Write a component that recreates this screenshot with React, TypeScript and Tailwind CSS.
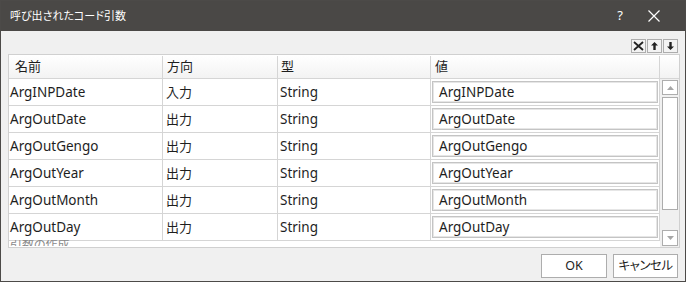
import React from "react";

const rows = [
  { name: "ArgINPDate", dir: "入力", type: "String", value: "ArgINPDate" },
  { name: "ArgOutDate", dir: "出力", type: "String", value: "ArgOutDate" },
  { name: "ArgOutGengo", dir: "出力", type: "String", value: "ArgOutGengo" },
  { name: "ArgOutYear", dir: "出力", type: "String", value: "ArgOutYear" },
  { name: "ArgOutMonth", dir: "出力", type: "String", value: "ArgOutMonth" },
  { name: "ArgOutDay", dir: "出力", type: "String", value: "ArgOutDay" },
];

const font = "font-['Segoe_UI','Noto_Sans','Noto_Sans_CJK_JP',sans-serif] [font-feature-settings:'palt']";

function ToolButton({ children }: { children: React.ReactNode }) {
  return (
    <div className="w-[15px] h-[14px] border border-[#adadad] bg-[#f3f3f3] flex items-center justify-center">
      {children}
    </div>
  );
}

export default function App() {
  return (
    <div className={`w-[686px] h-[282px] flex flex-col border border-[#4c4a48] bg-[#f0f0f0] text-[13.5px] text-[#1e1e1e] ${font}`}>
      {/* Title bar */}
      <div className="h-[30px] bg-[#4a4846] flex items-center pl-[9px] text-white shrink-0">
        <span className="text-[11px]">呼び出されたコード引数</span>
        <span className="ml-auto text-[13px] mr-[25px]">?</span>
        <svg width="12" height="12" viewBox="0 0 12 12" className="mr-[25px]">
          <path d="M0.5 0.5 L11.5 11.5 M11.5 0.5 L0.5 11.5" stroke="white" strokeWidth="1.2" />
        </svg>
      </div>

      {/* Body */}
      <div className="flex-1 flex flex-col pl-[7px] pr-[5px] pt-[8px] pb-[3px]">
        {/* toolbar */}
        <div className="flex justify-end gap-[1px] pr-[2px] h-[14px] mb-[1px]">
          <ToolButton>
            <svg width="11" height="10" viewBox="0 0 11 10">
              <path d="M1 1 L10 9 M10 1 L1 9" stroke="#222" strokeWidth="1.8" />
            </svg>
          </ToolButton>
          <ToolButton>
            <svg width="9" height="10" viewBox="0 0 9 10">
              <path d="M4.5 1 L1 4.5 H3.3 V9 H5.7 V4.5 H8 Z" fill="#222" />
            </svg>
          </ToolButton>
          <ToolButton>
            <svg width="9" height="10" viewBox="0 0 9 10">
              <path d="M4.5 9 L1 5.5 H3.3 V1 H5.7 V5.5 H8 Z" fill="#222" />
            </svg>
          </ToolButton>
        </div>

        {/* grid */}
        <div className="h-[194px] border border-[#d0d0d0] bg-white flex flex-col overflow-hidden">
          <div className="h-[24px] flex border-b border-[#d5d5d5] bg-gradient-to-b from-white to-[#f3f3f3] shrink-0 pt-[1px] text-[13px]">
            <div className="w-[154px] border-r border-[#d5d5d5] pl-[6px] flex items-center">名前</div>
            <div className="w-[115px] border-r border-[#d5d5d5] pl-[4px] flex items-center">方向</div>
            <div className="w-[153px] border-r border-[#d5d5d5] pl-[3px] flex items-center">型</div>
            <div className="w-[229px] border-r border-[#d5d5d5] pl-[4px] flex items-center">値</div>
            <div className="flex-1" />
          </div>
          <div className="flex flex-1 min-h-0">
            <div className="w-[651px] flex flex-col overflow-hidden">
              {rows.map((r) => (
                <div key={r.name} className="h-[27px] flex border-b border-[#d5d5d5] shrink-0">
                  <div className="w-[154px] border-r border-[#d5d5d5] pl-[1px] pt-[1px] flex items-center">{r.name}</div>
                  <div className="w-[115px] border-r border-[#d5d5d5] pl-[3px] pt-[1px] flex items-center text-[13px]">{r.dir}</div>
                  <div className="w-[153px] border-r border-[#d5d5d5] pl-[2px] pt-[1px] flex items-center">{r.type}</div>
                  <div className="w-[229px] border-r border-[#d5d5d5] pl-[1px] pr-[1px] py-[2px] flex">
                    <div className="flex-1 border border-[#c4c4c4] shadow-[inset_0_0_0_1px_#e6e6e6] flex items-center pl-[6px] pt-[1px]">
                      {r.value}
                    </div>
                  </div>
                </div>
              ))}
              <div className="h-[6px] overflow-hidden pl-[1px] text-[#8a8a8a] text-[12px] leading-[20px] -mt-[1px]">
                <span className="block -mt-[5px]">引数の作成</span>
              </div>
            </div>
            {/* scrollbar */}
            <div className="flex-1 bg-[#f0f0f0] flex flex-col items-center pt-[1px] pb-[1px] pl-[1px]">
              <div className="w-[16px] h-[15px] border border-[#adadad] bg-white flex items-center justify-center shrink-0">
                <svg width="7" height="4" viewBox="0 0 7 4">
                  <path d="M3.5 0 L7 4 H0 Z" fill="#a6a6a6" />
                </svg>
              </div>
              <div className="w-[16px] h-[113px] mt-[2px] border border-[#adadad] bg-white shrink-0" />
              <div className="flex-1" />
              <div className="w-[16px] h-[16px] border border-[#adadad] bg-white flex items-center justify-center shrink-0">
                <svg width="7" height="4" viewBox="0 0 7 4">
                  <path d="M0 0 H7 L3.5 4 Z" fill="#a6a6a6" />
                </svg>
              </div>
            </div>
          </div>
        </div>

        {/* buttons */}
        <div className="flex justify-end gap-[6px] mt-[6px] pr-[2px] text-[12.5px]">
          <div className="w-[66px] h-[24px] border border-[#adadad] bg-white flex items-center justify-center">OK</div>
          <div className="w-[65px] h-[24px] border border-[#adadad] bg-white flex items-center justify-center tracking-[-0.5px]">キャンセル</div>
        </div>
      </div>
    </div>
  );
}
